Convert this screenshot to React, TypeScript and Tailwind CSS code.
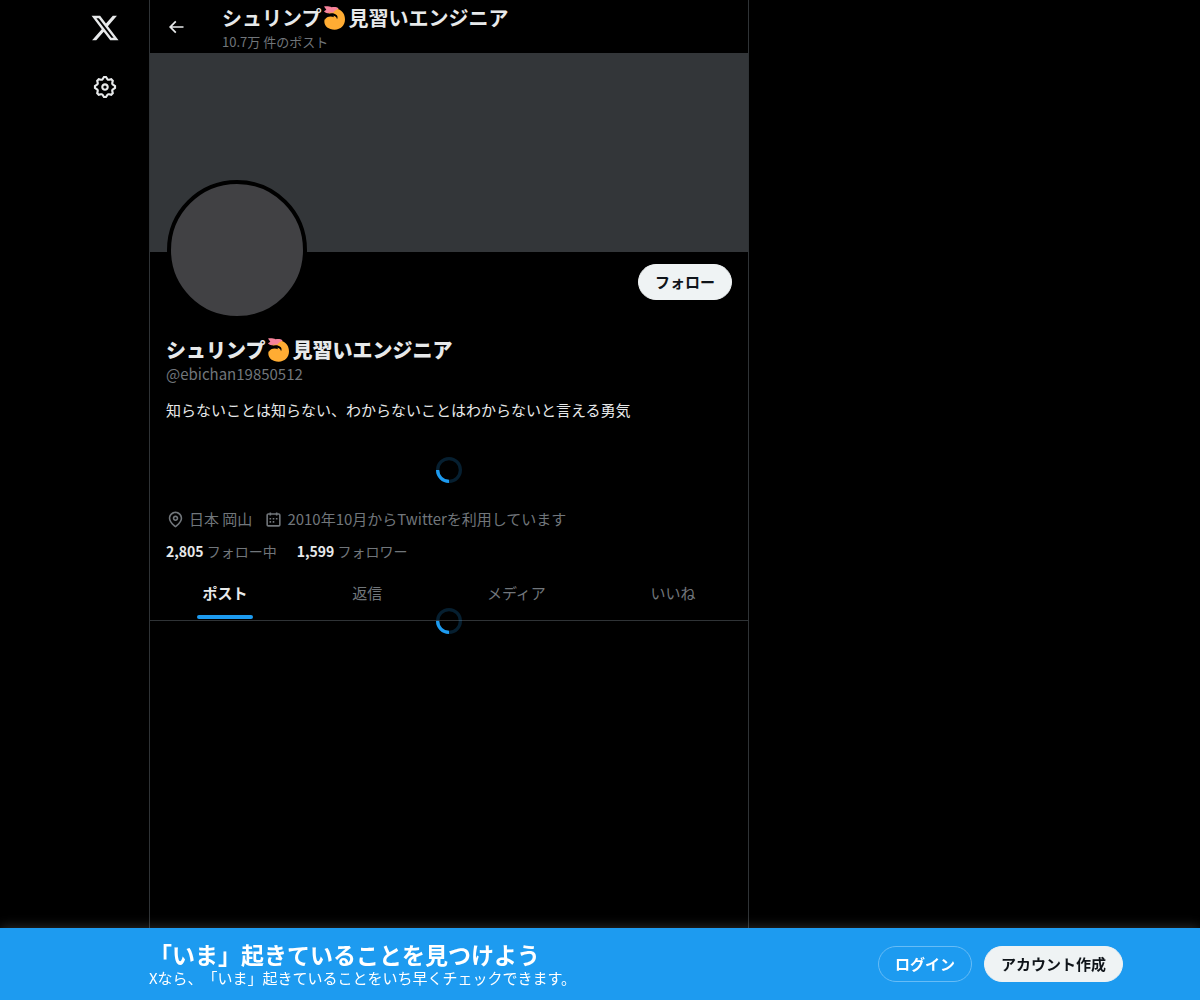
import { clsx } from "clsx";

const TABS = ["ポスト", "返信", "メディア", "いいね"];

const STATS = [
  { count: "2,805", label: "フォロー中" },
  { count: "1,599", label: "フォロワー" },
];

const ICONS = {
  x: "M18.244 2.25h3.308l-7.227 8.26 8.502 11.24H16.17l-5.214-6.817L4.99 21.75H1.68l7.73-8.835L1.254 2.25H8.08l4.713 6.231zm-1.161 17.52h1.833L7.084 4.126H5.117z",
  settings:
    "M10.54 1.75h2.92l1.57 2.36c.11.17.32.25.53.21l2.53-.59 2.17 2.17-.58 2.54c-.05.2.04.41.21.53l2.36 1.57v2.92l-2.36 1.57c-.17.12-.26.33-.21.53l.58 2.54-2.17 2.17-2.53-.59c-.21-.04-.42.04-.53.21l-1.57 2.36h-2.92l-1.58-2.36c-.11-.17-.32-.25-.52-.21l-2.54.59-2.17-2.17.58-2.54c.05-.2-.03-.41-.21-.53l-2.35-1.57v-2.92L4.1 8.97c.18-.12.26-.33.21-.53L3.73 5.9 5.9 3.73l2.54.59c.2.04.41-.04.52-.21l1.58-2.36zm1.07 2l-.98 1.47C10.05 6.08 9 6.5 7.99 6.27l-1.46-.34-.6.6.33 1.46c.24 1.01-.18 2.07-1.05 2.64l-1.46.98v.78l1.46.98c.87.57 1.29 1.63 1.05 2.64l-.33 1.46.6.6 1.46-.34c1.01-.23 2.06.19 2.64 1.05l.98 1.47h.78l.97-1.47c.58-.86 1.63-1.28 2.65-1.05l1.45.34.61-.6-.34-1.46c-.23-1.01.18-2.07 1.05-2.64l1.47-.98v-.78l-1.47-.98c-.87-.57-1.28-1.63-1.05-2.64l.34-1.46-.61-.6-1.45.34c-1.02.23-2.07-.19-2.65-1.05l-.97-1.47h-.78zM12 10.5c-.83 0-1.5.67-1.5 1.5s.67 1.5 1.5 1.5c.82 0 1.5-.67 1.5-1.5s-.68-1.5-1.5-1.5zM8.5 12c0-1.93 1.56-3.5 3.5-3.5 1.93 0 3.5 1.57 3.5 3.5s-1.57 3.5-3.5 3.5c-1.94 0-3.5-1.57-3.5-3.5z",
  back: "M7.414 13l5.043 5.04-1.414 1.42L3.586 12l7.457-7.46 1.414 1.42L7.414 11H21v2H7.414z",
  location:
    "M12 7c-1.93 0-3.5 1.57-3.5 3.5S10.07 14 12 14s3.5-1.57 3.5-3.5S13.93 7 12 7zm0 5c-.827 0-1.5-.673-1.5-1.5S11.173 9 12 9s1.5.673 1.5 1.5S12.827 12 12 12zm0-10c-4.687 0-8.5 3.813-8.5 8.5 0 5.967 7.621 11.116 7.945 11.332l.555.37.555-.37c.324-.216 7.945-5.365 7.945-11.332C20.5 5.813 16.687 2 12 2zm0 17.77c-1.665-1.241-6.5-5.196-6.5-9.27C5.5 6.916 8.416 4 12 4s6.5 2.916 6.5 6.5c0 4.073-4.835 8.028-6.5 9.27z",
  calendar:
    "M7 4V3h2v1h6V3h2v1h1.5C19.89 4 21 5.12 21 6.5v12c0 1.38-1.11 2.5-2.5 2.5h-13C4.12 21 3 19.88 3 18.5v-12C3 5.12 4.12 4 5.5 4H7zm0 2H5.5c-.27 0-.5.22-.5.5v12c0 .28.23.5.5.5h13c.28 0 .5-.22.5-.5v-12c0-.28-.22-.5-.5-.5H17v1h-2V6H9v1H7V6zm0 6h2v-2H7v2zm0 4h2v-2H7v2zm4-4h2v-2h-2v2zm0 4h2v-2h-2v2zm4-4h2v-2h-2v2z",
};

interface IconProps {
  name: keyof typeof ICONS;
  className: string;
}

function Icon({ name, className }: IconProps) {
  return (
    <svg viewBox="0 0 24 24" fill="currentColor" aria-hidden="true" className={clsx("shrink-0", className)}>
      <path d={ICONS[name]} />
    </svg>
  );
}

function Shrimp() {
  return (
    <svg viewBox="0 0 36 36" role="img" aria-label="エビ" className="mr-px ml-0.5 inline-block size-6 align-[-4px]">
      <path
        fill="#ffac33"
        d="M12 5C22 1 33 8 33 20c0 9-6.500 15.500-15.500 15.500S2 30 2 23.500C2 20 3 17.500 5 15.500L8 12z"
      />
      <path
        fill="#000"
        d="M1 17C5 11.500 12 10 17 11.500c4.500 1.500 6 5 4 8.500-.3-3.500-3-5.500-6-5.500 1 .6 1.500 1.200 1.700 2.200C11.500 14.500 5 15.500 2.500 21z"
      />
      <path
        fill="#f7839b"
        d="M1.500.8C6 0 10 .8 13 2c4-.8 8-.3 10.500 1.800C20 5.500 17 7.500 15 10c-3-.6-5.500-.3-8 .8C4.500 10.500 2.500 9.500 1.500 8L5 5.500z"
      />
    </svg>
  );
}

function DisplayName() {
  return (
    <>
      シュリンプ
      <Shrimp />
      見習いエンジニア
    </>
  );
}

function Spinner() {
  return (
    <svg viewBox="0 0 32 32" fill="none" stroke="#1d9bf0" strokeWidth="4" role="img" aria-label="読み込み中" className="size-[26px]">
      <circle cx="16" cy="16" r="14" opacity="0.2" />
      <path d="M2 16a14 14 0 0 0 14 14" />
    </svg>
  );
}

function Sidebar() {
  return (
    <nav className="flex w-[88px] shrink-0 flex-col items-center gap-[9px] py-[3px]">
      <a href="#" aria-label="X" className="flex size-[50px] items-center justify-center">
        <Icon name="x" className="size-[30px]" />
      </a>
      <a href="#settings" aria-label="設定" className="flex size-[50px] items-center justify-center">
        <Icon name="settings" className="size-[26px]" />
      </a>
    </nav>
  );
}

function Header() {
  return (
    <header className="flex h-[53px] items-center px-4">
      <button aria-label="戻る" className="w-14 shrink-0">
        <Icon name="back" className="size-5" />
      </button>
      <div className="pt-0.5">
        <h2 className="text-[20px] leading-7 font-bold">
          <DisplayName />
        </h2>
        <p className="text-[13px] leading-5 text-[#71767b]">10.7万 件のポスト</p>
      </div>
    </header>
  );
}

function Profile() {
  return (
    <section>
      <div className="aspect-3/1 bg-[#333639]" />
      <div className="px-4 pt-3">
        <div className="flex h-[74px] items-start justify-between">
          <div className="mx-px -mt-[84px] size-[140px] rounded-full border-4 border-black bg-[#414144]" />
          <button className="h-9 rounded-full border border-[#eff3f4] bg-[#eff3f4] px-4 text-[15px] font-bold text-[#0f1419]">
            フォロー
          </button>
        </div>

        <h1 className="text-[20px] leading-6 font-extrabold">
          <DisplayName />
        </h1>
        <p className="mt-0.5 text-[15px] leading-5 text-[#71767b]">@ebichan19850512</p>
        <p className="mt-4 text-[15px] leading-5">
          知らないことは知らない、わからないことはわからないと言える勇気
        </p>

        <div className="flex h-[89px] items-center justify-center pt-2.5">
          <Spinner />
        </div>

        <div className="flex flex-wrap gap-x-3 text-[15px] leading-5 text-[#71767b]">
          <span className="flex items-center gap-1">
            <Icon name="location" className="size-[19px]" />
            日本 岡山
          </span>
          <span className="flex items-center gap-1">
            <Icon name="calendar" className="size-[19px]" />
            2010年10月からTwitterを利用しています
          </span>
        </div>

        <div className="mt-3 flex gap-5 text-[14px] leading-5">
          {STATS.map(({ count, label }) => (
            <a key={label} href="#" className="text-[#71767b]">
              <span className="font-bold text-[#e7e9ea]">{count}</span> {label}
            </a>
          ))}
        </div>
      </div>
    </section>
  );
}

function Tabs() {
  return (
    <div role="tablist" className="mt-[5px] flex border-b border-[#2f3336] pb-px text-[15px] leading-5 text-[#71767b]">
      {TABS.map((tab, i) => (
        <button
          key={tab}
          role="tab"
          aria-selected={i === 0}
          className={clsx("flex h-[53px] flex-auto justify-center px-4", i === 0 && "font-bold text-[#e7e9ea]")}
        >
          <span className="relative flex h-full items-center">
            {tab}
            {i === 0 && (
              <span className="absolute bottom-0 left-1/2 h-1 w-14 -translate-x-1/2 rounded-full bg-[#1d9bf0]" />
            )}
          </span>
        </button>
      ))}
    </div>
  );
}

function LoginBar() {
  return (
    <div className="fixed inset-x-0 bottom-0 bg-[#1d9bf0] text-white shadow-[0_0_12px_rgba(255,255,255,0.2)]">
      <div className="mx-auto flex max-w-[1078px] items-center justify-between py-3 pr-4 pl-[88px]">
        <div className="[text-spacing-trim:space-all]">
          <p className="text-[23px] leading-7 font-bold">「いま」起きていることを見つけよう</p>
          <p className="text-[15px] leading-5">Xなら、「いま」起きていることをいち早くチェックできます。</p>
        </div>
        <div className="flex gap-3 text-[15px] font-bold">
          <button className="h-9 rounded-full border border-[#67bcf6] px-4">ログイン</button>
          <button className="h-9 rounded-full border border-[#eff3f4] bg-[#eff3f4] px-4 text-[#0f1419]">
            アカウント作成
          </button>
        </div>
      </div>
    </div>
  );
}

export default function App() {
  return (
    <div lang="ja" className="min-h-screen bg-black font-['Noto_Sans_CJK_JP',sans-serif] text-[#e7e9ea]">
      <div className="mx-auto flex min-h-screen max-w-[1078px]">
        <Sidebar />
        <main className="w-full max-w-[600px] border-x border-[#2f3336]">
          <Header />
          <Profile />
          <Tabs />
          <div className="-mt-[13px] flex justify-center">
            <Spinner />
          </div>
        </main>
      </div>
      <LoginBar />
    </div>
  );
}
